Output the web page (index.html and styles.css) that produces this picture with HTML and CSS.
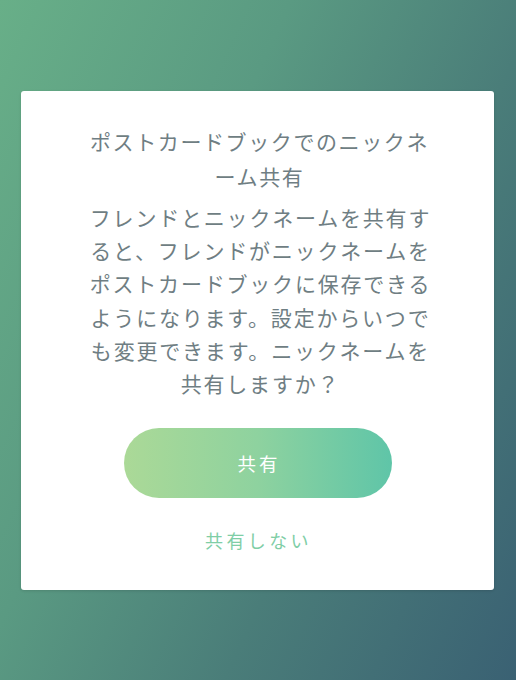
FILE: index.html
```html
<!DOCTYPE html>
<html lang="ja">
<head>
<meta charset="utf-8">
<link rel="stylesheet" href="styles.css">
</head>
<body>
<div class="screen">
  <div class="card">
    <h1 class="title">ポストカードブックでのニックネ<br>ーム共有</h1>
    <p class="message">フレンドとニックネームを共有す<br>ると、フレンドがニックネームを<br>ポストカードブックに保存できる<br>ようになります。設定からいつで<br>も変更できます。ニックネームを<br>共有しますか？</p>
    <button class="primary">共有</button>
    <button class="secondary">共有しない</button>
  </div>
</div>
</body>
</html>
```
FILE: styles.css
```css
html, body {
  margin: 0;
  padding: 0;
}
body {
  width: 516px;
  height: 680px;
  overflow: hidden;
  font-family: "Noto Sans CJK JP", "Noto Sans", sans-serif;
}
.screen {
  width: 516px;
  height: 680px;
  box-sizing: border-box;
  padding: 91px 22px 0 21px;
  background: linear-gradient(115deg, #68af88 0%, #5a9a82 35%, #4a7d79 65%, #3a6173 100%);
}
.card {
  height: 499px;
  box-sizing: border-box;
  background: #ffffff;
  border-radius: 3px;
  box-shadow: 0 1px 3px rgba(0, 0, 0, 0.12);
  padding-top: 33px;
  display: flex;
  flex-direction: column;
  align-items: center;
}
.title {
  margin: 0;
  font-size: 21px;
  font-weight: 400;
  line-height: 35px;
  letter-spacing: 1.6px;
  color: #6f7e83;
  text-align: center;
  white-space: nowrap;
  padding-left: 4px;
}
.message {
  margin: 7px 0 0;
  font-size: 21px;
  font-weight: 400;
  line-height: 33.2px;
  letter-spacing: 1.8px;
  color: #6f7e83;
  text-align: center;
  white-space: nowrap;
  padding-left: 6px;
}
.primary {
  margin-top: 28px;
  width: 268px;
  height: 70px;
  border: none;
  border-radius: 35px;
  background: linear-gradient(90deg, #abd997 0%, #8ed29f 50%, #5fc5a8 100%);
  color: #ffffff;
  font-family: inherit;
  font-size: 18.5px;
  letter-spacing: 3px;
  padding: 0 0 0 3px;
  line-height: 1;
}
.secondary {
  margin-top: 30px;
  border: none;
  background: none;
  padding: 0 0 0 2px;
  color: #7fcea6;
  font-family: inherit;
  font-size: 18px;
  line-height: 24px;
  letter-spacing: 3.4px;
}
```
